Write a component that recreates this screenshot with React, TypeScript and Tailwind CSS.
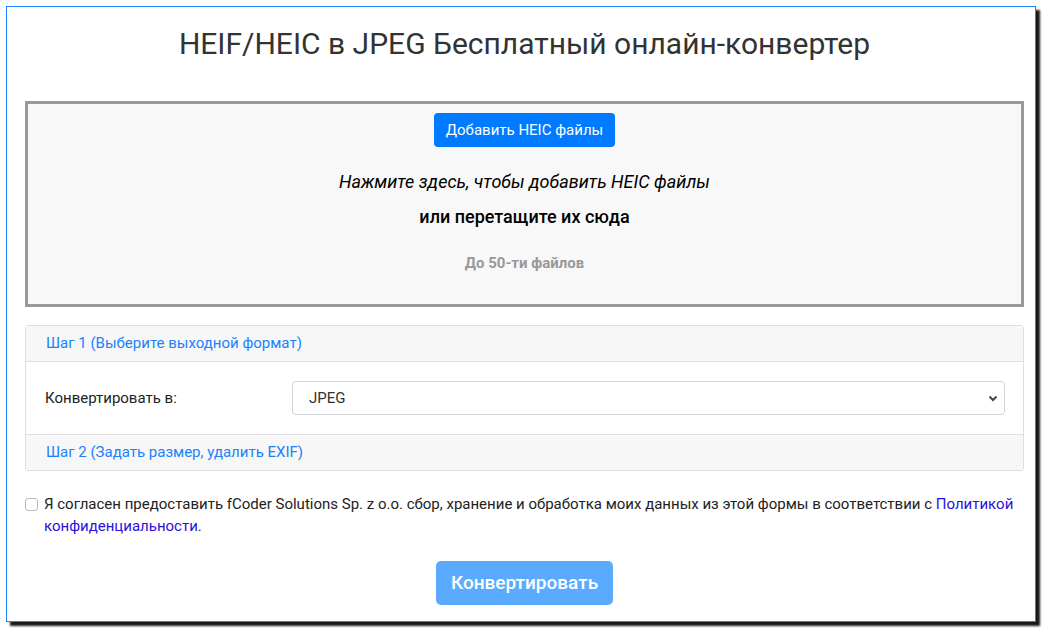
import React from "react";

export default function App() {
  return (
    <div className="w-[1043px] h-[629px] bg-white pt-[6px] pl-[6px]" style={{ fontFamily: "Roboto, 'Liberation Sans', sans-serif" }}>
      <div className="w-[1030px] h-[616px] border border-[#1a82fb] bg-white shadow-[4px_4px_2px_rgba(0,0,0,0.9)] pl-[18px] pr-[11px] flex flex-col">
        <h1 className="text-center text-[30px] text-[#333] leading-[36px] mt-[19px] font-normal">HEIF/HEIC в JPEG Бесплатный онлайн-конвертер</h1>
        <div className="mt-[39px] h-[206px] border-[3px] border-[#999] bg-[#f8f8f8] flex flex-col items-center pt-[9px]">
          <button className="h-[34px] px-[12px] rounded-[4px] bg-[#007bff] text-white text-[15px] leading-[24px]">Добавить HEIC файлы</button>
          <div className="mt-[23px] text-[18px] italic text-black leading-[24px]">Нажмите здесь, чтобы добавить HEIC файлы</div>
          <div className="mt-[11px] text-[18px] font-medium text-black leading-[24px]">или перетащите их сюда</div>
          <div className="mt-[24px] text-[15px] font-bold text-[#999] leading-[20px]">До 50-ти файлов</div>
        </div>
        <div className="mt-[18px] border border-[#dfdfdf] rounded-[3px]">
          <div className="h-[36px] bg-[#f7f7f7] border-b border-[#dfdfdf] flex items-center pl-[20px] text-[15px] text-[#1a82fb]">Шаг 1 (Выберите выходной формат)</div>
          <div className="h-[72px] flex items-center pl-[19px] pr-[18px]">
            <div className="w-[247px] text-[15px] text-[#222]">Конвертировать в:</div>
            <div className="flex-1 h-[34px] border border-[#ced4da] rounded-[4px] flex items-center justify-between pl-[16px] pr-[5px] text-[15px] text-[#333]">
              <span>JPEG</span>
              <svg width="12" height="12" viewBox="0 0 12 12"><path d="M2.5 4.5 L6 8 L9.5 4.5" fill="none" stroke="#444" strokeWidth="2" /></svg>
            </div>
          </div>
          <div className="h-[36px] bg-[#f7f7f7] border-t border-[#dfdfdf] flex items-center pl-[20px] text-[15px] text-[#1a82fb]">Шаг 2 (Задать размер, удалить EXIF)</div>
        </div>
        <div className="mt-[22px] flex items-start text-[15px] leading-[22px] text-[#222]">
          <span className="mt-[5px] w-[13px] h-[13px] border border-[#bbb] rounded-[3px] bg-white shrink-0" />
          <p className="ml-[6px]">Я согласен предоставить fCoder Solutions Sp. z o.o. сбор, хранение и обработка моих данных из этой формы в соответствии с <span className="text-[#2a10e0]">Политикой конфиденциальности</span>.</p>
        </div>
        <div className="mt-[24px] flex justify-center">
          <button className="w-[177px] h-[44px] rounded-[5px] bg-[#5aabff] text-white text-[19px] font-medium">Конвертировать</button>
        </div>
      </div>
    </div>
  );
}
